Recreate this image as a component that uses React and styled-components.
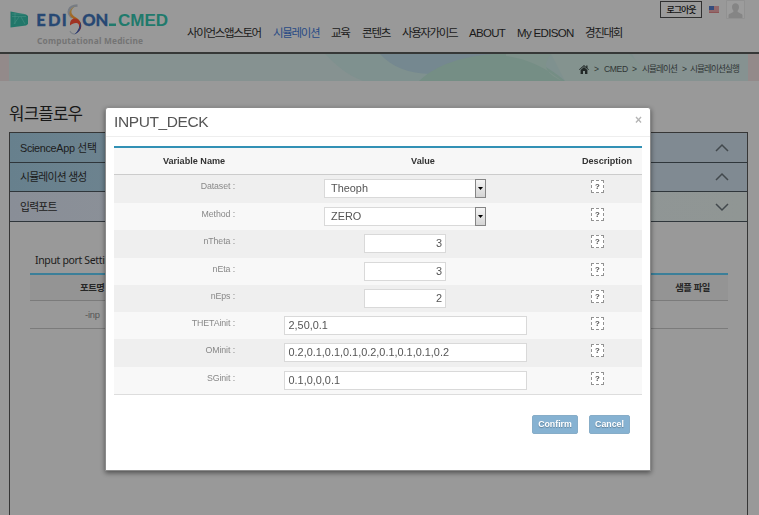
import React from "react";
import styled, { createGlobalStyle } from "styled-components";

const Global = createGlobalStyle`
  *, *::before, *::after { box-sizing: border-box; }
  body {
    margin: 0;
    background: #999;
    overflow: hidden;
    font-family: "Liberation Sans", "Noto Sans CJK KR", sans-serif;
    color: #1c1c1c;
  }
`;

const Page = styled.div`
  height: 515px;
  display: flex;
  flex-direction: column;
  background: #999;
  overflow: hidden;
`;

const Header = styled.header`
  height: 54px;
  flex: none;
  display: flex;
  border-bottom: 2px solid #363837;
`;

const LogoArt = styled.svg`
  flex: none;
  width: 187px;
  height: 52px;
`;

const HeaderSide = styled.div`
  flex: 1;
  display: flex;
  flex-direction: column;
`;

const Account = styled.div`
  height: 19px;
  display: flex;
  align-items: flex-start;
  justify-content: flex-end;
  padding-right: 14px;
`;

const LogoutButton = styled.button`
  width: 42px;
  height: 17px;
  margin: 1px 7px 0 0;
  padding: 0;
  border: 1px solid #303030;
  background: #9b9b9b;
  color: #111;
  font: 500 9px/14px "Noto Sans CJK KR", sans-serif;
  letter-spacing: -1px;
  white-space: nowrap;
`;

const Flag = styled.svg`
  width: 10px;
  height: 7px;
  margin: 6px 7px 0 0;
`;

const Avatar = styled.svg`
  width: 19px;
  height: 19px;
`;

const Nav = styled.nav`
  display: flex;
  gap: 12px;
  height: 28px;
`;

const NavItem = styled.a`
  width: ${(p) => p.$w}px;
  flex: none;
  white-space: nowrap;
  color: ${(p) => (p.$active ? "#284a85" : "#191919")};
  font: 11.5px/28px "Liberation Sans", "Noto Sans CJK KR", sans-serif;
  letter-spacing: ${(p) => p.$ls || 0}px;
`;

const Banner = styled.div`
  height: 27px;
  flex: none;
  padding: 0 11px 0 9px;
  display: grid;
  background: #938a8a;
`;

const BannerBody = styled.div`
  display: grid;
  background: #869291;
  > * { grid-area: 1 / 1; }
`;

const BannerArt = styled.svg`
  width: 739px;
  height: 27px;
`;

const Crumbs = styled.div`
  display: flex;
  align-items: center;
  justify-content: flex-end;
  padding: 3px 8px 0 0;
  font: 8.6px/12px "Liberation Sans", "Noto Sans CJK KR", sans-serif;
  color: #303635;
  white-space: nowrap;
`;

const Crumb = styled.span`
  flex: none;
  width: ${(p) => p.$w}px;
  letter-spacing: ${(p) => p.$ls || 0}px;
`;

const HomeIcon = styled.svg`
  width: 10px;
  height: 9px;
  margin-right: 5px;
`;

const Title = styled.h1`
  margin: 19px 0 0 9px;
  height: 32px;
  font: 400 16.8px/26px "Noto Sans CJK KR", sans-serif;
  letter-spacing: -0.8px;
  color: #181818;
`;

const Workflow = styled.section`
  flex: 1;
  width: 739px;
  margin-left: 9px;
  border: 1px solid #363636;
  border-bottom: 0;
`;

const Step = styled.div`
  height: ${(p) => p.$h}px;
  display: flex;
  align-items: center;
  justify-content: space-between;
  padding: 0 18px 0 10px;
  border-bottom: 1px solid #2f363b;
  background: ${(p) =>
    p.$pale
      ? "linear-gradient(90deg, #898e97, #8e9499 40%, #909694)"
      : "linear-gradient(90deg, #67808d, #6d838f 14%, #808a92 85%)"};
  font: 10.8px/16px "Liberation Sans", "Noto Sans CJK KR", sans-serif;
  letter-spacing: ${(p) => p.$ls || 0}px;
`;

const Chevron = styled.svg`
  width: 14px;
  height: 10px;
`;

const PortArea = styled.div`
  width: 698px;
  margin: 30px 0 0 20px;
`;

const PortTitle = styled.h2`
  margin: 0;
  padding-left: 5px;
  height: 21px;
  font: 400 10.5px/17px "Noto Sans", sans-serif;
  letter-spacing: -0.35px;
`;

const PortRow = styled.div`
  height: 28px;
  display: flex;
  align-items: center;
  justify-content: space-between;
  padding: 0 18px 0 ${(p) => (p.$head ? 50 : 55)}px;
  border-top: ${(p) => (p.$head ? "2px solid #3b7f99" : "0")};
  border-bottom: 1px solid #7b7b7b;
  background: ${(p) => (p.$head ? "#949494" : "#999")};
  color: ${(p) => (p.$head ? "#272727" : "#555")};
  font: ${(p) => (p.$head ? 700 : 400)} 9.3px/14px "Liberation Sans", "Noto Sans CJK KR", sans-serif;
  letter-spacing: ${(p) => (p.$head ? -0.4 : -0.2)}px;
`;

const Layer = styled.div`
  position: fixed;
  inset: 0;
  padding: 107px 0 0 105px;
`;

const Dialog = styled.div`
  width: 546px;
  height: 364px;
  border: 1px solid #8b8b8b;
  border-radius: 3px 3px 1px 1px;
  background: #fff;
  box-shadow: 0 2px 5px rgba(0, 0, 0, 0.48);
`;

const DialogHead = styled.div`
  height: 29px;
  display: flex;
  justify-content: space-between;
  padding: 0 8px;
  border-bottom: 1px solid #eee;
  color: #555;
  font-size: 15.5px;
  line-height: 28px;
`;

const DialogTitle = styled.span`
  letter-spacing: -0.4px;
`;

const Close = styled.span`
  color: #b5b5b5;
  font: 700 12px/25px "Liberation Sans", sans-serif;
`;

const Variables = styled.div`
  margin: 9px 8px 0;
  border-top: 2px solid #3291b5;
  border-bottom: 1px solid #ddd;
`;

const VarHead = styled.div`
  height: 27px;
  display: grid;
  grid-template-columns: 160px 298px 70px;
  justify-items: center;
  align-items: center;
  background: #f7f7f7;
  border-bottom: 1px solid #ccc;
  color: #333;
  font: 700 9.1px/12px "Liberation Sans", sans-serif;
`;

const VarRow = styled.div`
  height: ${(p) => p.$h}px;
  display: grid;
  grid-template-columns: 121px 340px 67px;
  background: ${(p) => (p.$odd ? "#efefef" : "#f8f8f8")};
`;

const Label = styled.label`
  padding-top: 5px;
  text-align: right;
  color: #888;
  font: 8.8px/13px "Liberation Sans", sans-serif;
  letter-spacing: -0.1px;
`;

const ValueCell = styled.div`
  display: flex;
  justify-content: center;
  padding-top: 4px;
`;

const Field = styled.div`
  width: ${(p) => p.$w}px;
  height: 19px;
  display: flex;
  justify-content: ${(p) => (p.$right ? "flex-end" : "flex-start")};
  padding: 0 ${(p) => (p.$right ? 3 : 4)}px;
  border: 1px solid #d9d9d9;
  background: #fff;
  color: #555;
  font: 10.9px/17px "Liberation Sans", sans-serif;
`;

const Select = styled(Field)`
  justify-content: space-between;
  padding: 0 0 0 6px;
`;

const DropButton = styled.span`
  width: 11px;
  height: 19px;
  margin: -1px -1px 0 0;
  display: grid;
  place-items: center;
  border: 1px solid #858585;
  background: linear-gradient(#f4f4f4, #d4d4d4);
`;

const Help = styled.span`
  width: 13px;
  height: 13px;
  margin: 5px 0 0 16px;
  border: 1px dashed #929292;
  background: #fff;
  color: #555;
  text-align: center;
  font: 700 8px/11px "Liberation Mono", monospace;
`;

const Actions = styled.div`
  display: flex;
  justify-content: flex-end;
  gap: 11px;
  padding: 20px 20px 0 0;
`;

const Action = styled.button`
  width: ${(p) => p.$w}px;
  height: 19px;
  padding: 0;
  border: 1px solid #87adc8;
  border-radius: 2px;
  background: #86b2d2;
  color: #fff;
  font: 700 8.8px/17px "Liberation Sans", sans-serif;
  text-shadow: 0 1px 1px rgba(0, 0, 0, 0.28);
`;

const variables = [
  { name: "Dataset", kind: "select", value: "Theoph", h: 28 },
  { name: "Method", kind: "select", value: "ZERO", h: 27 },
  { name: "nTheta", kind: "number", value: "3", h: 28 },
  { name: "nEta", kind: "number", value: "3", h: 27 },
  { name: "nEps", kind: "number", value: "2", h: 27 },
  { name: "THETAinit", kind: "text", value: "2,50,0.1", h: 27 },
  { name: "OMinit", kind: "text", value: "0.2,0.1,0.1,0.1,0.2,0.1,0.1,0.1,0.2", h: 28 },
  { name: "SGinit", kind: "text", value: "0.1,0,0,0.1", h: 27 },
];

const menu = [
  { text: "사이언스앱스토어", w: 74, ls: -1.35 },
  { text: "시뮬레이션", w: 46, ls: -1.35, active: true },
  { text: "교육", w: 19, ls: -1.3 },
  { text: "콘텐츠", w: 28, ls: -1.2 },
  { text: "사용자가이드", w: 55, ls: -1.4 },
  { text: "ABOUT", w: 36, ls: -0.7 },
  { text: "My EDISON", w: 56, ls: -0.65 },
  { text: "경진대회", w: 37, ls: -1.3 },
];

function Logo() {
  return (
    <LogoArt viewBox="0 0 187 52">
      <defs>
        <linearGradient id="swirl" x1="0" y1="0" x2="0" y2="1">
          <stop offset="0" stopColor="#92804a" />
          <stop offset="0.45" stopColor="#a5621c" />
          <stop offset="0.75" stopColor="#931c22" />
          <stop offset="1" stopColor="#353c75" />
        </linearGradient>
      </defs>
      <path d="M10.5 11.5 26 14.5 28 16v8l-2 1.500-15.500 2z" fill="#22776a" />
      <path d="M12 14h12M12 16.500h14M15 13v11M14 24l5-7M25 24l-4-7" stroke="#4f9488" strokeWidth="0.5" fill="none" />
      <g fontFamily="Lato" fontWeight="900" fontSize="16.5" fill="#274873" stroke="#274873" strokeWidth="0.3">
        <text x="36.3 48 61.8" y="26">EDI</text>
        <text x="82.3 95.5" y="26">ON</text>
      </g>
      <path d="M77.500 5.500C68 6 66.500 13 72 17.500" fill="none" stroke="#777c84" strokeWidth="2.400" />
      <path d="M75.500 6C68.500 9 67.500 15 73 18.500C80 22 82 29 74 34.500C85 30 82 21 76 17.500C70 14 70 10 75.500 6z" fill="url(#swirl)" />
      <path d="M70 25.500C69.500 19 74 17 78 19.500C80 21 80.500 23 80 24.500C77 22 73 22.500 70 25.500z" fill="#a03324" />
      <path d="M80.500 22c1.500 5-.5 10-6 12.500 4-4 5.500-8 6-12.500z" fill="#273e75" />
      <path d="M70 31c1 2.500 3 3 5 3" fill="none" stroke="#7c8088" strokeWidth="1.200" />
      <path d="M109 23.500h7v2.500h-7z" fill="#207a6c" />
      <text x="118" y="26" textLength="50" fontFamily="Liberation Sans" fontWeight="700" fontSize="17" fill="#207a6c">CMED</text>
      <text x="37" y="43.500" textLength="106" fontFamily="Noto Sans" fontWeight="700" fontSize="8.300" fill="#747474">Computational Medicine</text>
    </LogoArt>
  );
}

function Arrow({ down }) {
  return (
    <Chevron viewBox="0 0 14 10">
      <path d={down ? "M1 2l6 6 6-6" : "M1 8l6-6 6 6"} fill="none" stroke="#42494d" strokeWidth="1.5" />
    </Chevron>
  );
}

function Value({ kind, value }) {
  if (kind === "select")
    return (
      <Select $w={162}>
        {value}
        <DropButton>
          <svg width="5" height="3"><path d="M0 0h5L2.5 3z" fill="#000" /></svg>
        </DropButton>
      </Select>
    );
  return <Field $w={kind === "number" ? 82 : 243} $right={kind === "number"}>{value}</Field>;
}

export default function App() {
  return (
    <>
      <Global />
      <Page>
        <Header>
          <Logo />
          <HeaderSide>
            <Account>
              <LogoutButton>로그아웃</LogoutButton>
              <Flag viewBox="0 0 10 7">
                <path d="M0 0h10v7H0z" fill="#987f80" />
                <path d="M5 1h5M5 3h5M0 5h10M0 6.5h10" stroke="#89474a" strokeWidth="0.8" />
                <path d="M0 0h5v4H0z" fill="#344c7c" />
              </Flag>
              <Avatar viewBox="0 0 19 19">
                <path d="M.5.5h18v18H.5z" fill="#9c9c9c" stroke="#919191" />
                <path d="M6 7c0-5 7-5 7 0 0 2-1 3-1.5 4 0 2 4 2 5 4v3H2.500v-3c1-2 5-2 5-4C7 10 6 9 6 7z" fill="#858585" />
              </Avatar>
            </Account>
            <Nav>
              {menu.map((m) => (
                <NavItem key={m.text} $w={m.w} $ls={m.ls} $active={m.active}>{m.text}</NavItem>
              ))}
            </Nav>
          </HeaderSide>
        </Header>
        <Banner>
          <BannerBody>
            <BannerArt viewBox="9 0 739 27">
              <path d="M325 0C337 12 347 21 363 27H647L632 0z" fill="#7f918f" />
              <path d="M380 0C402 25 450 28 492 0z" fill="#758890" />
              <path d="M419 27C437 10 464 2 494 0h12C532 3 550 14 565 27z" fill="#758e85" />
              <path d="M506 0h45c-8 10-8 18 11 27-18-14-34-22-56-25z" fill="#7e928b" />
              <path d="M551 0h78l28 27h-92z" fill="#84938f" />
            </BannerArt>
            <Crumbs>
              <HomeIcon viewBox="0 0 10 9">
                <path d="M5 0 0 4.500l.6.6L5 1.200l4.400 3.900.6-.6-1.500-1.300V.6H7.200V2zM1.600 5 5 2l3.400 3v4H6V6H4v3H1.600z" fill="#222827" />
              </HomeIcon>
              <Crumb $w={10}>&gt;</Crumb>
              <Crumb $w={28} $ls={-0.4}>CMED</Crumb>
              <Crumb $w={10}>&gt;</Crumb>
              <Crumb $w={40} $ls={-0.9}>시뮬레이션</Crumb>
              <Crumb $w={8}>&gt;</Crumb>
              <Crumb $w={50} $ls={-0.9}>시뮬레이션실행</Crumb>
            </Crumbs>
          </BannerBody>
        </Banner>
        <Title>워크플로우</Title>
        <Workflow>
          <Step $h={30} $ls={-0.3}>ScienceApp 선택<Arrow /></Step>
          <Step $h={29} $ls={-0.75}>시뮬레이션 생성<Arrow /></Step>
          <Step $h={30} $pale $ls={-0.75}>입력포트<Arrow down /></Step>
          <PortArea>
            <PortTitle>Input port Setting</PortTitle>
            <PortRow $head><span>포트명</span><span>샘플 파일</span></PortRow>
            <PortRow>-inp</PortRow>
          </PortArea>
        </Workflow>
      </Page>
      <Layer>
        <Dialog>
          <DialogHead>
            <DialogTitle>INPUT_DECK</DialogTitle>
            <Close>×</Close>
          </DialogHead>
          <Variables>
            <VarHead>
              <span>Variable Name</span>
              <span>Value</span>
              <span>Description</span>
            </VarHead>
            {variables.map((v, i) => (
              <VarRow key={v.name} $h={v.h} $odd={i % 2 === 0}>
                <Label>{v.name} :</Label>
                <ValueCell><Value kind={v.kind} value={v.value} /></ValueCell>
                <Help>?</Help>
              </VarRow>
            ))}
          </Variables>
          <Actions>
            <Action $w={46}>Confirm</Action>
            <Action $w={41}>Cancel</Action>
          </Actions>
        </Dialog>
      </Layer>
    </>
  );
}
